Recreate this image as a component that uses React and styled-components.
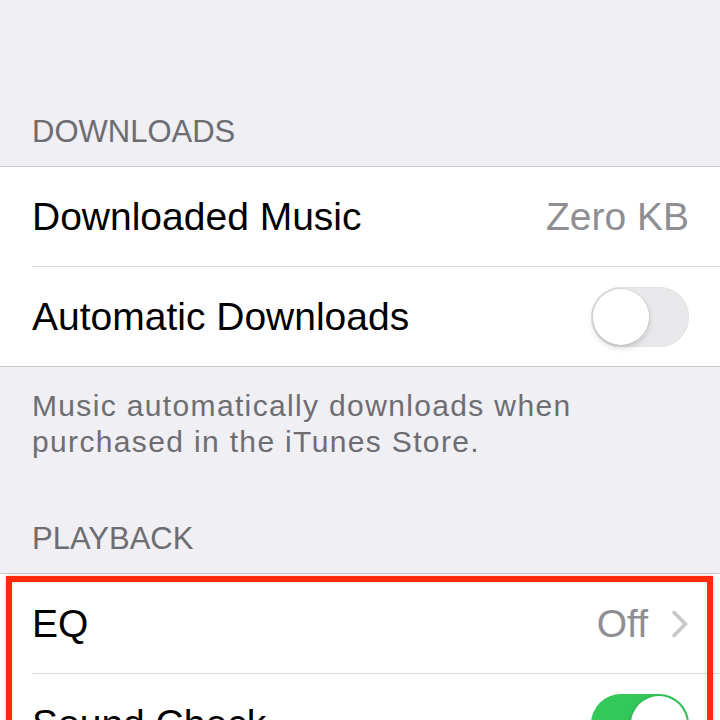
import React from "react";
import styled, { createGlobalStyle } from "styled-components";

const Global = createGlobalStyle`
  html, body { margin: 0; padding: 0; background: #efeff4; }
  body { font-family: "Liberation Sans", Arial, sans-serif; -webkit-font-smoothing: antialiased; }
`;

const Page = styled.div`
  position: relative;
  width: 720px;
  height: 720px;
  overflow: hidden;
  background: #efeff4;
`;

const SectionHeader = styled.div`
  padding: ${(p) => p.$top}px 32px 16px;
  font-size: 31px;
  line-height: 36px;
  color: #6d6d72;
  text-transform: uppercase;
`;

const Group = styled.div`
  background: #ffffff;
  border-top: 1px solid #c8c7cc;
  border-bottom: 1px solid #c8c7cc;
`;

const Row = styled.div`
  height: 99px;
  display: flex;
  align-items: center;
  justify-content: space-between;
  padding: 0 31px 0 32px;
  box-sizing: border-box;
`;

const Divider = styled.div`
  height: 1px;
  margin-left: 32px;
  background: #d9d8dd;
`;

const Label = styled.span`
  font-size: 39px;
  color: #000000;
  white-space: nowrap;
`;

const Trailing = styled.div`
  display: flex;
  align-items: center;
  gap: 23px;
`;

const Value = styled.span`
  font-size: 39px;
  color: #8e8e93;
  white-space: nowrap;
`;

const Footer = styled.div`
  padding: 21px 32px 0;
  font-size: 30px;
  line-height: 36px;
  letter-spacing: 1.35px;
  color: #6d6d72;
`;

const Track = styled.div`
  position: relative;
  width: 98px;
  height: 60px;
  border-radius: 30px;
  box-sizing: border-box;
  background: ${(p) => (p.$on ? "#34c759" : "#e9e9eb")};
  box-shadow: ${(p) => (p.$on ? "none" : "inset 0 0 0 1px #e3e3e6")};
`;

const Knob = styled.div`
  position: absolute;
  top: 2px;
  left: ${(p) => (p.$on ? "40px" : "2px")};
  width: 56px;
  height: 56px;
  border-radius: 50%;
  background: #ffffff;
  box-shadow: 0 3px 6px rgba(0, 0, 0, 0.16), 0 0 0 1px rgba(0, 0, 0, 0.05);
`;

const Highlight = styled.div`
  position: absolute;
  left: 6px;
  top: 576px;
  width: 707px;
  height: 220px;
  box-sizing: border-box;
  border: 6px solid #fe2a0a;
  box-shadow: 0 0 3px rgba(254, 42, 10, 0.35), inset 0 0 3px rgba(0, 0, 0, 0.15);
  pointer-events: none;
`;

function Toggle({ on }) {
  return (
    <Track $on={on}>
      <Knob $on={on} />
    </Track>
  );
}

function Chevron() {
  return (
    <svg width="18" height="28" viewBox="0 0 18 28" fill="none">
      <path d="M3 2.5 L14.5 14 L3 25.5" stroke="#c7c7cc" strokeWidth="3.6" strokeLinecap="round" strokeLinejoin="round" />
    </svg>
  );
}

export default function App() {
  return (
    <Page>
      <Global />
      <SectionHeader $top={114}>Downloads</SectionHeader>
      <Group>
        <Row>
          <Label>Downloaded Music</Label>
          <Value>Zero KB</Value>
        </Row>
        <Divider />
        <Row>
          <Label>Automatic Downloads</Label>
          <Toggle on={false} />
        </Row>
      </Group>
      <Footer>
        Music automatically downloads when
        <br />
        purchased in the iTunes Store.
      </Footer>
      <SectionHeader $top={61}>Playback</SectionHeader>
      <Group>
        <Row>
          <Label>EQ</Label>
          <Trailing>
            <Value>Off</Value>
            <Chevron />
          </Trailing>
        </Row>
        <Divider />
        <Row>
          <Label>Sound Check</Label>
          <Toggle on={true} />
        </Row>
      </Group>
      <Highlight />
    </Page>
  );
}
